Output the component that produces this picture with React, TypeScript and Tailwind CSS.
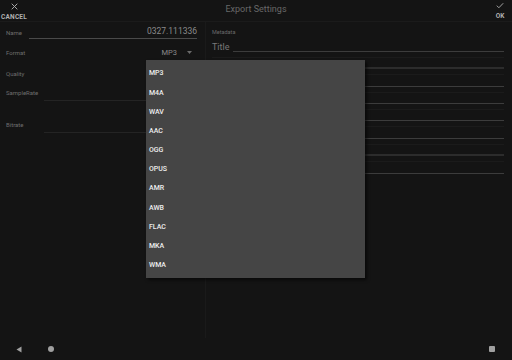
import React from "react";

const formats = ["MP3", "M4A", "WAV", "AAC", "OGG", "OPUS", "AMR", "AWB", "FLAC", "MKA", "WMA"];
const metaRows = ["Artist", "Album", "Genre", "Year", "Track", "Comment", "Composer"];

export default function App() {
  return (
    <div
      className="relative w-[512px] h-[360px] bg-[#141414] flex flex-col overflow-hidden"
      style={{ fontFamily: "Roboto, 'Noto Sans', sans-serif" }}
    >
      {/* Header */}
      <div className="h-[22px] flex items-stretch justify-between border-b border-[#1b1b1b]">
        <div className="w-[28px] flex flex-col items-center pt-[2.5px]">
          <svg width="7" height="7" viewBox="0 0 10 10" className="text-[#aaa]">
            <path d="M1 1L9 9M9 1L1 9" stroke="currentColor" strokeWidth="1.4" />
          </svg>
          <span className="text-[6.5px] leading-[8px] mt-[3px] font-bold text-[#b0b0b0] tracking-[0.2px]">CANCEL</span>
        </div>
        <div className="flex-1 flex items-center justify-center pb-[1px] text-[9px] text-[#686868]">
          Export Settings
        </div>
        <div className="w-[28px] flex flex-col items-center pt-[1.5px] pl-[4px]">
          <svg width="8" height="7" viewBox="0 0 10 8" className="text-[#aaa]">
            <path d="M1 4.2L3.6 6.8L9 1.2" stroke="currentColor" strokeWidth="1.2" fill="none" />
          </svg>
          <span className="text-[6.5px] leading-[8px] mt-[3.5px] font-bold text-[#b0b0b0]">OK</span>
        </div>
      </div>

      {/* Body */}
      <div className="flex-1 flex">
        {/* Left panel */}
        <div className="w-[206px] border-r border-[#1a1a1a] text-[#6e6e6e]">
          <div className="h-[20px] flex items-center pl-[6px] pr-[8px]">
            <span className="w-[23px] text-[6px]">Name</span>
            <div className="flex-1 h-[14px] flex items-center justify-end border-b border-[#4a4a4a] text-[8.5px] text-[#8a8a8a]">
              0327.111336
            </div>
          </div>
          <div className="h-[21px] flex items-center pl-[6px] pr-[8px]">
            <span className="flex-1 text-[6px]">Format</span>
            <span className="text-[7.5px] text-[#8a8a8a] mr-[10px]">MP3</span>
            <svg width="5" height="3" viewBox="0 0 5 3" className="mr-[5px]">
              <path d="M0 0H5L2.5 3Z" fill="#6a6a6a" />
            </svg>
          </div>
          <div className="h-[20px] flex items-center pl-[6px]">
            <span className="text-[6px]">Quality</span>
          </div>
          <div className="pl-[6px] pt-[6px]">
            <div className="h-[8px] leading-[8px] text-[6px]">SampleRate</div>
            <div className="ml-[38px] mt-[3px] border-b border-[#242424]" />
          </div>
          <div className="pl-[6px] pt-[20px]">
            <div className="h-[8px] leading-[8px] text-[6px]">Bitrate</div>
            <div className="ml-[38px] mt-[3px] border-b border-[#242424]" />
          </div>
        </div>

        {/* Right panel */}
        <div className="flex-1 pl-[6px] pr-[8px] pt-[6px]">
          <div className="h-[11.5px] leading-[8px] text-[5.5px] text-[#6a6a6a]">Metadata</div>
          <div className="h-[17.4px] flex items-end pb-[4px]">
            <span className="w-[21px] text-[9px] leading-[11px] text-[#787878]">Title</span>
            <div className="flex-1 h-[1px] mb-[1px] bg-[#3c3c3c]" />
          </div>
          {metaRows.map((r, i) => (
            <div key={r} className="h-[17.4px] flex items-end pb-[4px] border-t border-[#1b1b1b]">
              <span className="invisible w-[21px] text-[9px] leading-[11px]">{r}</span>
              <div className={`flex-1 mb-[1px] ${i === 0 || i === 5 ? "h-[2px] bg-[#2c2c2c]" : "h-[1px] bg-[#3c3c3c]"}`} />
            </div>
          ))}
        </div>
      </div>

      {/* Nav bar */}
      <div className="h-[22px] flex items-center px-[16px]">
        <svg width="6" height="7" viewBox="0 0 6 7">
          <path d="M0.5 3.5L5.5 0.5V6.5Z" fill="#a0a0a0" />
        </svg>
        <div className="ml-[26px] w-[6px] h-[6px] rounded-full bg-[#a0a0a0]" />
        <div className="ml-auto mr-[1px] w-[6px] h-[6px] rounded-[1px] bg-[#a0a0a0]" />
      </div>

      {/* Format dropdown */}
      <div className="absolute left-[146px] top-[60px] w-[219px] bg-[#454545] pt-[4px] pb-[3px] shadow-[2px_2px_3px_rgba(0,0,0,0.6)]">
        {formats.map((f) => (
          <div key={f} className="h-[19.2px] flex items-center px-[3px] text-[7px] font-medium text-[#eeeeee]">
            {f}
          </div>
        ))}
      </div>
    </div>
  );
}
